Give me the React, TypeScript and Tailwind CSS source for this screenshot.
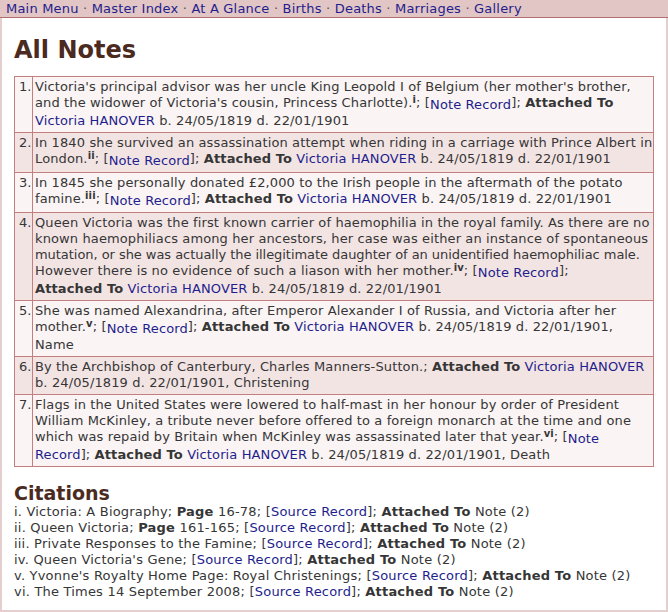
import React from "react";

const menu = ["Main Menu", "Master Index", "At A Glance", "Births", "Deaths", "Marriages", "Gallery"];

function A({ children, low }: { children: React.ReactNode; low?: boolean }) {
  return <span className={low ? "text-[#1e1e8c] align-[-2px]" : "text-[#1e1e8c]"}>{children}</span>;
}

function Sup({ n }: { n: string }) {
  return <sup className="font-bold text-[10px] align-[4px] top-0">{n}</sup>;
}

const rec = (
  <>
    [<A low>Note Record</A>]
  </>
);
const att = (
  <>
    <b>Attached To</b> <A>Victoria HANOVER</A>
  </>
);
const dates = "b. 24/05/1819 d. 22/01/1901";

// lines are broken where the original page wraps them
const notes: React.ReactNode[][] = [
  [
    "Victoria's principal advisor was her uncle King Leopold I of Belgium (her mother's brother,",
    <>
      and the widower of Victoria's cousin, Princess Charlotte).<Sup n="i" />; {rec}; <b>Attached To</b>
    </>,
    <>
      <A>Victoria HANOVER</A> {dates}
    </>,
  ],
  [
    "In 1840 she survived an assassination attempt when riding in a carriage with Prince Albert in",
    <>
      London.<Sup n="ii" />; {rec}; {att} {dates}
    </>,
  ],
  [
    "In 1845 she personally donated £2,000 to the Irish people in the aftermath of the potato",
    <>
      famine.<Sup n="iii" />; {rec}; {att} {dates}
    </>,
  ],
  [
    "Queen Victoria was the first known carrier of haemophilia in the royal family. As there are no",
    "known haemophiliacs among her ancestors, her case was either an instance of spontaneous",
    <span className="tracking-[-0.05px]">
      mutation, or she was actually the illegitimate daughter of an unidentified haemophiliac male.
    </span>,
    <>
      However there is no evidence of such a liason with her mother.<Sup n="iv" />; {rec};
    </>,
    <>
      {att} {dates}
    </>,
  ],
  [
    "She was named Alexandrina, after Emperor Alexander I of Russia, and Victoria after her",
    <>
      mother.<Sup n="v" />; {rec}; {att} {dates},
    </>,
    "Name",
  ],
  [
    <>
      By the Archbishop of Canterbury, Charles Manners-Sutton.; {att}
    </>,
    `${dates}, Christening`,
  ],
  [
    "Flags in the United States were lowered to half-mast in her honour by order of President",
    "William McKinley, a tribute never before offered to a foreign monarch at the time and one",
    <>
      which was repaid by Britain when McKinley was assassinated later that year.<Sup n="vi" />; [
      <A low>Note</A>
    </>,
    <>
      <A>Record</A>]; {att} {dates}, Death
    </>,
  ],
];

const citations: { n: string; title: string; page?: string }[] = [
  { n: "i", title: "Victoria: A Biography", page: "16-78" },
  { n: "ii", title: "Queen Victoria", page: "161-165" },
  { n: "iii", title: "Private Responses to the Famine" },
  { n: "iv", title: "Queen Victoria's Gene" },
  { n: "v", title: "Yvonne's Royalty Home Page: Royal Christenings" },
  { n: "vi", title: "The Times 14 September 2008" },
];

export default function App() {
  return (
    <div className="w-[668px] h-[612px] flex flex-col bg-white text-[13px] text-[#363636] font-['DejaVu_Sans','Verdana',sans-serif]">
      <div className="h-[18px] shrink-0 bg-[#e2c5c5] border-b border-[#b46e6e] pl-[6px] leading-[17px] text-[13px] tracking-[0.2px]">
        {menu.map((m, i) => (
          <span key={m}>
            {i > 0 && <span className="text-[#555]"> · </span>}
            <A>{m}</A>
          </span>
        ))}
      </div>
      <div className="flex-1 border-x-2 border-b-2 border-[#e4cece] px-[12px]">
        <h1 className="mt-[18px] mb-[12px] text-[24px] leading-[28px] font-bold text-[#4b2a1f]">All Notes</h1>
        <table className="w-full table-fixed border-collapse border border-[#c27f7f] leading-[16px] tracking-[0.12px]">
          <colgroup>
            <col className="w-[18px]" />
            <col />
          </colgroup>
          <tbody>
            {notes.map((lines, i) => (
              <tr key={i} className={i % 2 === 0 ? "bg-[#faf4f4]" : "bg-[#f3e4e4]"}>
                <td className="border border-[#c27f7f] pl-[4px] pr-0 pt-[2px] pb-[3px] align-top whitespace-nowrap tracking-normal">{i + 1}.</td>
                <td className="border border-[#c27f7f] pl-[2px] pr-[2px] pt-[2px] pb-[3px] align-top whitespace-nowrap">
                  {lines.map((l, j) => (
                    <React.Fragment key={j}>
                      {j > 0 && <br />}
                      {l}
                    </React.Fragment>
                  ))}
                </td>
              </tr>
            ))}
          </tbody>
        </table>
        <h2 className="mt-[15px] text-[19px] leading-[22px] font-bold text-[#4b2a1f]">Citations</h2>
        <div className="leading-[16px] tracking-[0.2px]">
          {citations.map((c) => (
            <div key={c.n}>
              {c.n}. {c.title};{" "}
              {c.page && (
                <>
                  <b>Page</b> {c.page};{" "}
                </>
              )}
              [<A>Source Record</A>]; <b>Attached To</b> Note (2)
            </div>
          ))}
        </div>
      </div>
    </div>
  );
}
